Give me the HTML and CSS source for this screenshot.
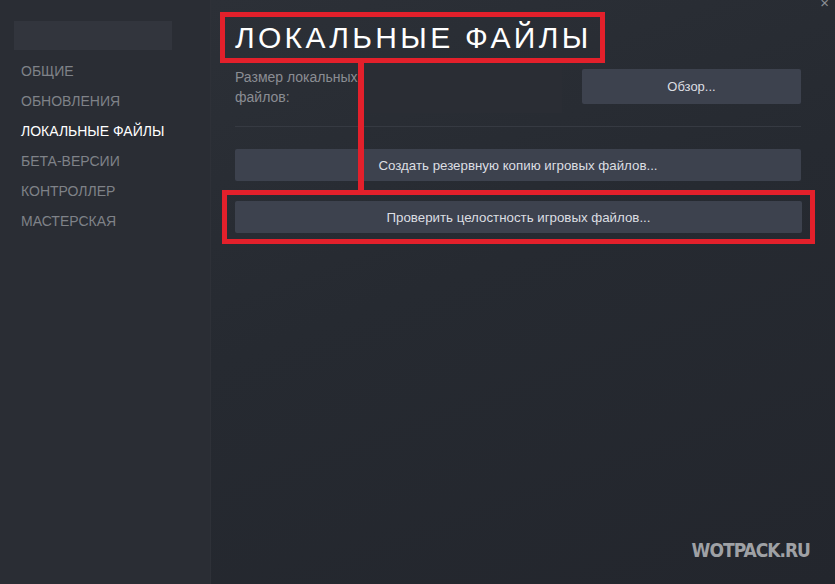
FILE: index.html
```html
<!DOCTYPE html>
<html lang="ru">
<head>
    <meta charset="UTF-8">
    <meta name="viewport" content="width=device-width, initial-scale=1.0">
    <title>Свойства: Локальные файлы</title>
    <link rel="stylesheet" href="styles.css">
</head>
<body>
    <div class="window">
        <div class="sidebar">
            <div class="search-box"></div>
            <ul class="nav">
                <li>ОБЩИЕ</li>
                <li>ОБНОВЛЕНИЯ</li>
                <li class="active">ЛОКАЛЬНЫЕ ФАЙЛЫ</li>
                <li>БЕТА-ВЕРСИИ</li>
                <li>КОНТРОЛЛЕР</li>
                <li>МАСТЕРСКАЯ</li>
            </ul>
        </div>
        <div class="main">
            <span class="close-btn">×</span>
            <h1 class="page-title">ЛОКАЛЬНЫЕ ФАЙЛЫ</h1>
            <div class="size-row">
                <div class="size-label">Размер локальных файлов:</div>
                <div class="size-value"></div>
                <button class="btn btn-browse">Обзор...</button>
            </div>
            <div class="separator"></div>
            <button class="btn btn-wide">Создать резервную копию игровых файлов...</button>
            <div class="highlight">
                <button class="btn btn-wide">Проверить целостность игровых файлов...</button>
            </div>
            <div class="connector"></div>
            <div class="watermark">WOTPACK.RU</div>
        </div>
    </div>
</body>
</html>
```

FILE: styles.css
```css
html, body {
    margin: 0;
    padding: 0;
    height: 100%;
}
body {
    font-family: "Liberation Sans", Arial, sans-serif;
    background-color: #24272e;
    overflow: hidden;
}
.window {
    display: flex;
    height: 584px;
}
.sidebar {
    width: 211px;
    flex-shrink: 0;
    background-color: #2a2d34;
    border-right: 1px solid #2e3138;
    box-sizing: border-box;
}
.search-box {
    height: 29px;
    margin: 21px 38px 0 14px;
    background-color: #32353d;
}
.nav {
    list-style: none;
    margin: 6px 0 0 0;
    padding: 0;
}
.nav li {
    height: 30px;
    line-height: 30px;
    padding-left: 21px;
    font-size: 14px;
    color: #7f8288;
}
.nav li.active {
    color: #ffffff;
}
.main {
    flex: 1;
    position: relative;
    padding: 12px 34px 0 24px;
    background: linear-gradient(160deg, #2c3037 0%, #262a31 45%, #23262d 100%);
}
.close-btn {
    position: absolute;
    top: -5px;
    right: 6px;
    font-size: 15px;
    line-height: 15px;
    color: #8d9096;
}
.page-title {
    display: inline-block;
    margin: 0 0 0 -15px;
    padding: 0 8px 0 10px;
    border: 5px solid #e3202b;
    font-size: 30px;
    font-weight: normal;
    line-height: 41px;
    letter-spacing: 3.3px;
    color: #ffffff;
}
.size-row {
    display: flex;
    align-items: flex-start;
    margin-top: 2px;
}
.size-label {
    width: 123px;
    padding-top: 2px;
    font-size: 14px;
    line-height: 20px;
    color: #8a8d93;
}
.size-value {
    width: 200px;
    height: 48px;
    margin-left: 4px;
    background-color: #2a2d34;
}
.btn {
    display: block;
    border: none;
    border-radius: 2px;
    background-color: #3d424e;
    color: #dcdee2;
    font-family: "Liberation Sans", Arial, sans-serif;
    font-size: 13px;
    cursor: pointer;
}
.btn-browse {
    width: 219px;
    height: 35px;
    margin: 4px 0 0 20px;
}
.separator {
    height: 1px;
    margin-top: 13px;
    background-color: #363a42;
}
.btn-wide {
    width: 100%;
    height: 32px;
    font-size: 13.3px;
}
.separator + .btn-wide {
    margin-top: 22px;
}
.highlight {
    margin: 9px -14px 0 -13px;
    padding: 6px 8px;
    border: 5px solid #e3202b;
}
.connector {
    position: absolute;
    left: 147px;
    top: 63px;
    width: 6px;
    height: 128px;
    background-color: #e3202b;
}
.watermark {
    position: absolute;
    right: 25px;
    bottom: 23px;
    font-family: "DejaVu Sans Condensed", "Liberation Sans", sans-serif;
    font-weight: bold;
    font-size: 19px;
    letter-spacing: -1px;
    color: #9fa1a5;
}
```
